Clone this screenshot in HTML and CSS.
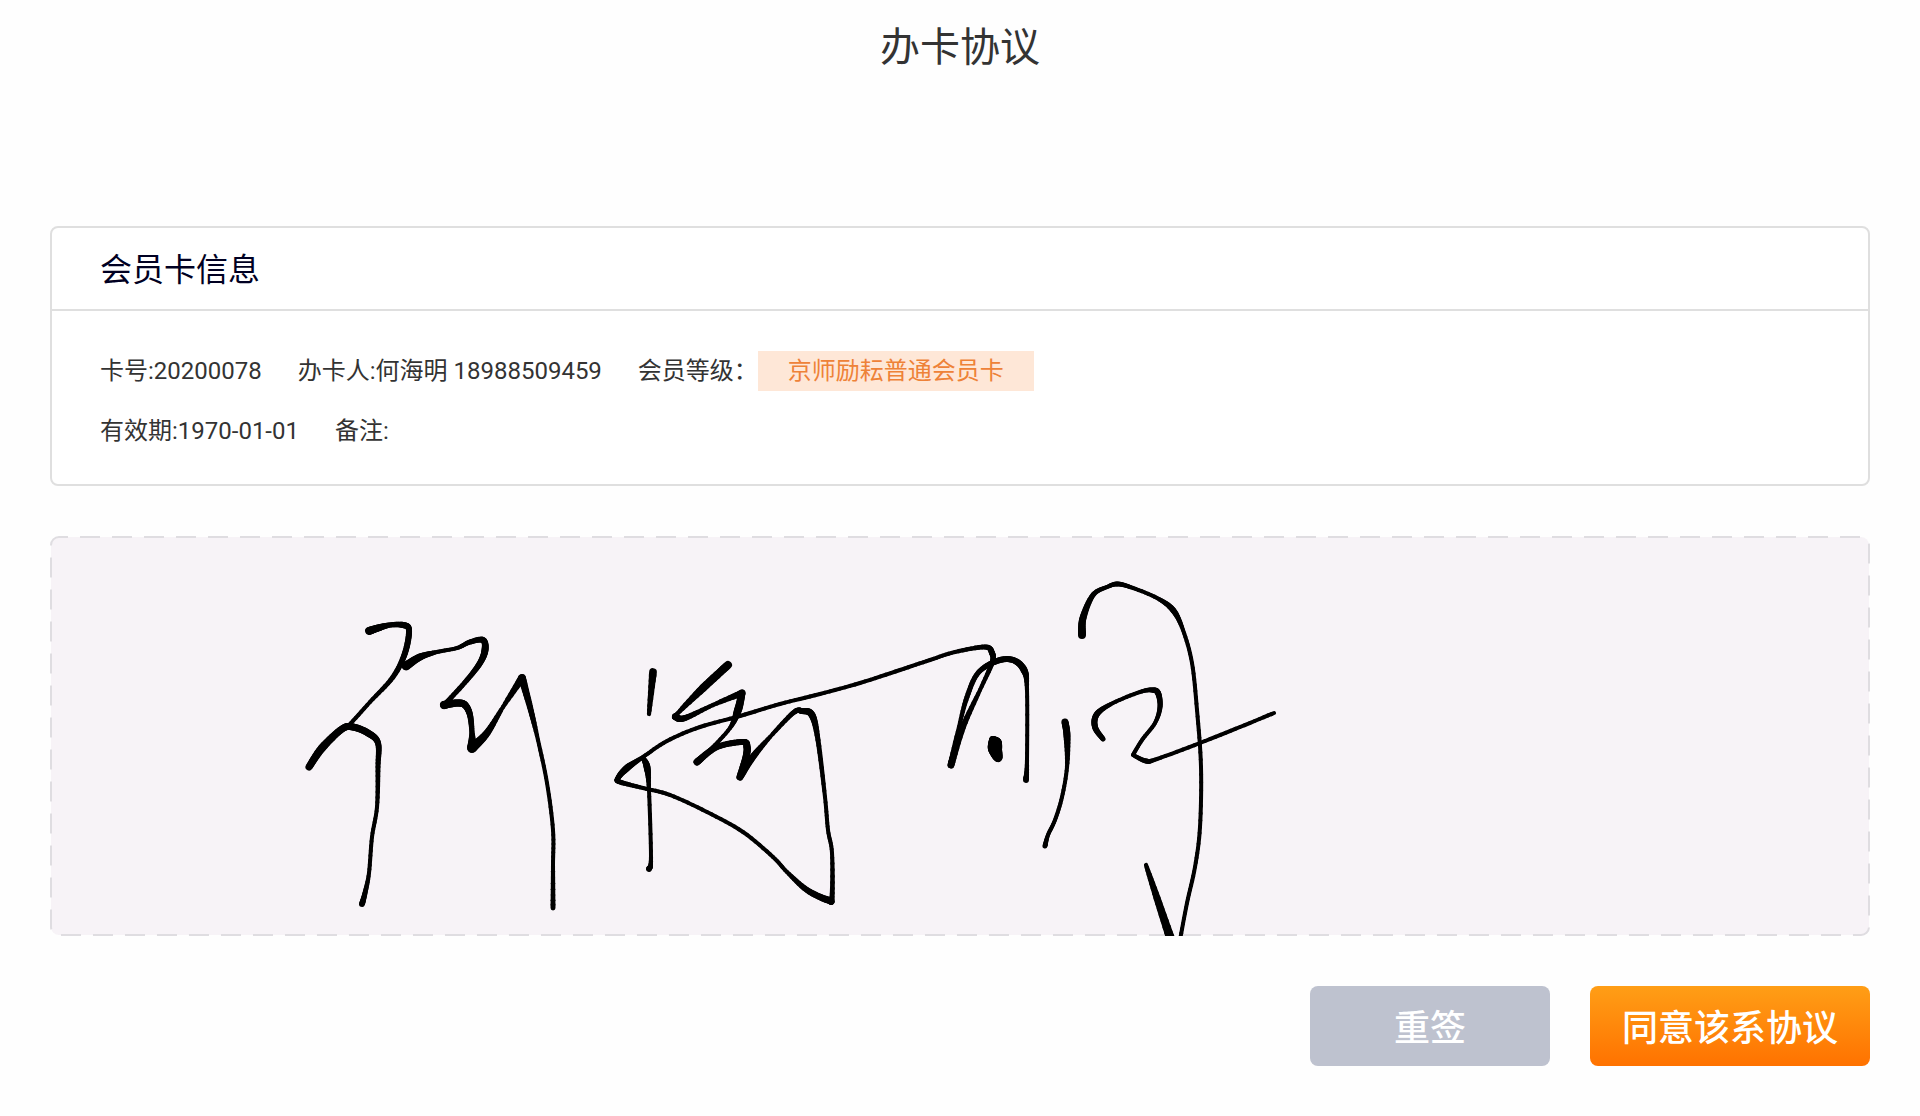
FILE: index.html
```html
<!DOCTYPE html>
<html lang="zh-CN">
<head>
  <meta charset="utf-8">
  <meta name="viewport" content="width=device-width, initial-scale=1">
  <title>办卡协议</title>
  <link rel="stylesheet" href="styles.css">
</head>
<body>
  <header class="page-header">
    <h1 class="page-title">办卡协议</h1>
  </header>

  <main class="page-main">
    <section class="card">
      <h2 class="card-title">会员卡信息</h2>
      <div class="card-body">
        <div class="info-row">
          <span>卡号:20200078</span>
          <span>办卡人:何海明 18988509459</span>
          <span class="level">会员等级：<span class="level-tag">京师励耘普通会员卡</span></span>
        </div>
        <div class="info-row">
          <span>有效期:1970-01-01</span>
          <span>备注:</span>
        </div>
      </div>
    </section>

    <svg class="signature" role="img" aria-label="签名">
      <rect class="signature-frame" x="1" y="1" rx="8"/>
      <g class="signature-ink" id="ink"></g>
    </svg>

    <div class="actions">
      <button class="button button-reset" type="button">重签</button>
      <button class="button button-agree" type="button">同意该系协议</button>
    </div>
  </main>
  <script src="signature.js"></script>
</body>
</html>
```

FILE: styles.css
```css
* {
  box-sizing: border-box;
}

body {
  margin: 0;
  background: #fefefe;
  color: #333;
  font-family: Roboto, "Noto Sans CJK SC", sans-serif;
}

.page-header {
  padding: 18px 50px 14px;
  text-align: center;
}

.page-title {
  margin: 0;
  font-size: 40px;
  font-weight: 400;
  line-height: 60px;
}

.page-main {
  display: flex;
  flex-direction: column;
  gap: 50px;
  padding: 134px 50px 50px;
}

.card {
  border: 2px solid #dfdfdf;
  border-radius: 8px;
  background: #fff;
}

.card-title {
  margin: 0;
  padding: 17px 48px 14px;
  border-bottom: 2px solid #dfdfdf;
  color: #000022;
  font-size: 32px;
  font-weight: 400;
  line-height: 50px;
}

.card-body {
  display: flex;
  flex-direction: column;
  gap: 20px;
  padding: 40px 48px 33px;
  font-size: 24px;
  line-height: 40px;
}

.info-row {
  display: flex;
  flex-wrap: wrap;
  gap: 0 36px;
}

.level {
  display: flex;
}

.level-tag {
  padding: 0 30px;
  background: #fee7d7;
  color: #ee8238;
}

.signature {
  display: block;
  width: 100%;
  height: 400px;
}

.signature-frame {
  width: calc(100% - 2px);
  height: calc(100% - 2px);
  fill: #f7f3f7;
  stroke: #dfdde1;
  stroke-width: 2px;
  stroke-dasharray: 20 12;
  stroke-dashoffset: 11px;
}

.signature-ink {
  stroke: #000;
  stroke-linecap: round;
}

.actions {
  display: flex;
  justify-content: flex-end;
  gap: 40px;
}

.button {
  height: 80px;
  padding: 0 0 2px;
  border: 0;
  border-radius: 8px;
  color: #fff;
  font-family: inherit;
  font-size: 36px;
  font-weight: 500;
}

.button-reset {
  width: 240px;
  background: #bec2cf;
}

.button-agree {
  width: 280px;
  background: linear-gradient(#ff9e16, #ff7200);
}
```

FILE: signature.js
```js
// Pen strokes as [x, y, pen width]. A repeated point makes a sharp turn.
const strokes = [
  [[319,95,8],[328,92,7],[340,89,5],[353,89,6],[359,94,6],[355,117,6],[343,141,5],[320,166,4],[299,189,4],[292,193,4]],
  [[259,231,7],[272,212,8],[292,193,7],[303,191,7],[318,197,7],[328,207,6],[328,231,5],[327,271,4],[322,301,4],[319,337,4],[315,357,5],[312,368,6]],
  [[356,130,9],[370,121,7],[387,116,4],[407,112,4],[420,106,5],[433,104,6],[435,114,7],[430,127,6],[417,144,5],[397,166,5],[394,169,8],[394,169,8],[407,167,7],[415,169,7],[420,179,6],[422,197,5],[422,212,10],[422,212,10],[437,197,7],[453,171,4],[472,142,8],[472,142,8],[480,171,6],[488,204,4],[497,247,4],[503,294,4],[503,330,4],[503,372,5]],
  [[603,136,8],[599,178,4]],
  [[593,222,4],[597,231,7],[599,254,4],[601,321,4],[599,333,6]],
  [[678,129,8],[653,152,8],[628,177,4],[626,181,7],[635,182,6],[663,169,4],[692,157,7],[692,157,7],[688,174,8],[680,192,4],[660,214,4],[647,226,7],[647,226,7],[667,211,6],[693,206,6],[697,211,7],[696,221,7],[690,241,7],[690,241,7],[702,222,7],[720,201,4],[743,177,5],[752,175,6],[762,179,7],[768,204,5],[775,261,4],[778,294,4],[782,317,4],[782,361,5],[778,364,7],[757,354,6],[737,336,4],[723,321,4],[693,296,4],[657,276,4],[620,259,4],[593,252,4],[570,246,5],[568,242,5],[577,232,7],[593,221,4],[617,205,4],[650,191,4],[690,180,4],[730,168,4],[770,158,4],[810,147,4],[850,134,4],[880,124,4],[905,116,4],[935,111,5],[942,117,6],[942,127,5],[930,154,4],[913,191,6],[901,229,7],[901,229,7],[909,191,4],[917,161,5],[928,137,5],[947,125,6],[963,124,6],[974,134,7],[977,154,4],[977,224,4],[976,244,6]],
  [[943,204,8],[942,213,8],[948,222,8],[949,214,6],[948,206,7],[943,204,8]],
  [[1015,186,7],[1017,200,7],[1017,231,4],[1012,261,4],[1005,284,4],[998,299,4],[995,310,5]],
  [[1032,99,8],[1033,82,7],[1043,59,5],[1057,51,4],[1068,48,5],[1083,52,4],[1107,62,4],[1123,74,6],[1133,94,4],[1142,127,4],[1147,174,4],[1151,231,4],[1150,291,4],[1145,331,4],[1137,367,4],[1130,404,4]],
  [[1096,329,4],[1107,362,7],[1121,404,9]],
  [[1053,203,5],[1045,191,6],[1047,178,6],[1063,167,4],[1090,156,4],[1102,154,5],[1108,157,6],[1110,171,5],[1105,187,4],[1092,204,4],[1083,219,4],[1083,219,4],[1096,225,5],[1107,223,4],[1150,207,4],[1190,191,4],[1224,177,4]]
];

const SVG_NS = "http://www.w3.org/2000/svg";
const STEPS = 8;
const ink = document.getElementById("ink");

// Catmull-Rom interpolation of one coordinate.
function curve(a, b, c, d, t) {
  return b + 0.5 * t * (c - a + t * (2 * a - 5 * b + 4 * c - d + t * (3 * (b - c) + d - a)));
}

function addLine(from, to) {
  const line = document.createElementNS(SVG_NS, "line");
  line.setAttribute("x1", from[0]);
  line.setAttribute("y1", from[1]);
  line.setAttribute("x2", to[0]);
  line.setAttribute("y2", to[1]);
  line.setAttribute("stroke-width", (from[2] + to[2]) / 2);
  ink.appendChild(line);
}

for (const points of strokes) {
  let last = points[0];
  for (let i = 0; i < points.length - 1; i++) {
    const b = points[i];
    const c = points[i + 1];
    if (b[0] === c[0] && b[1] === c[1]) continue;
    const a = points[i - 1] || b;
    const d = points[i + 2] || c;
    for (let s = 1; s <= STEPS; s++) {
      const t = s / STEPS;
      const next = [
        curve(a[0], b[0], c[0], d[0], t),
        curve(a[1], b[1], c[1], d[1], t),
        b[2] + (c[2] - b[2]) * t
      ];
      addLine(last, next);
      last = next;
    }
  }
}
```
